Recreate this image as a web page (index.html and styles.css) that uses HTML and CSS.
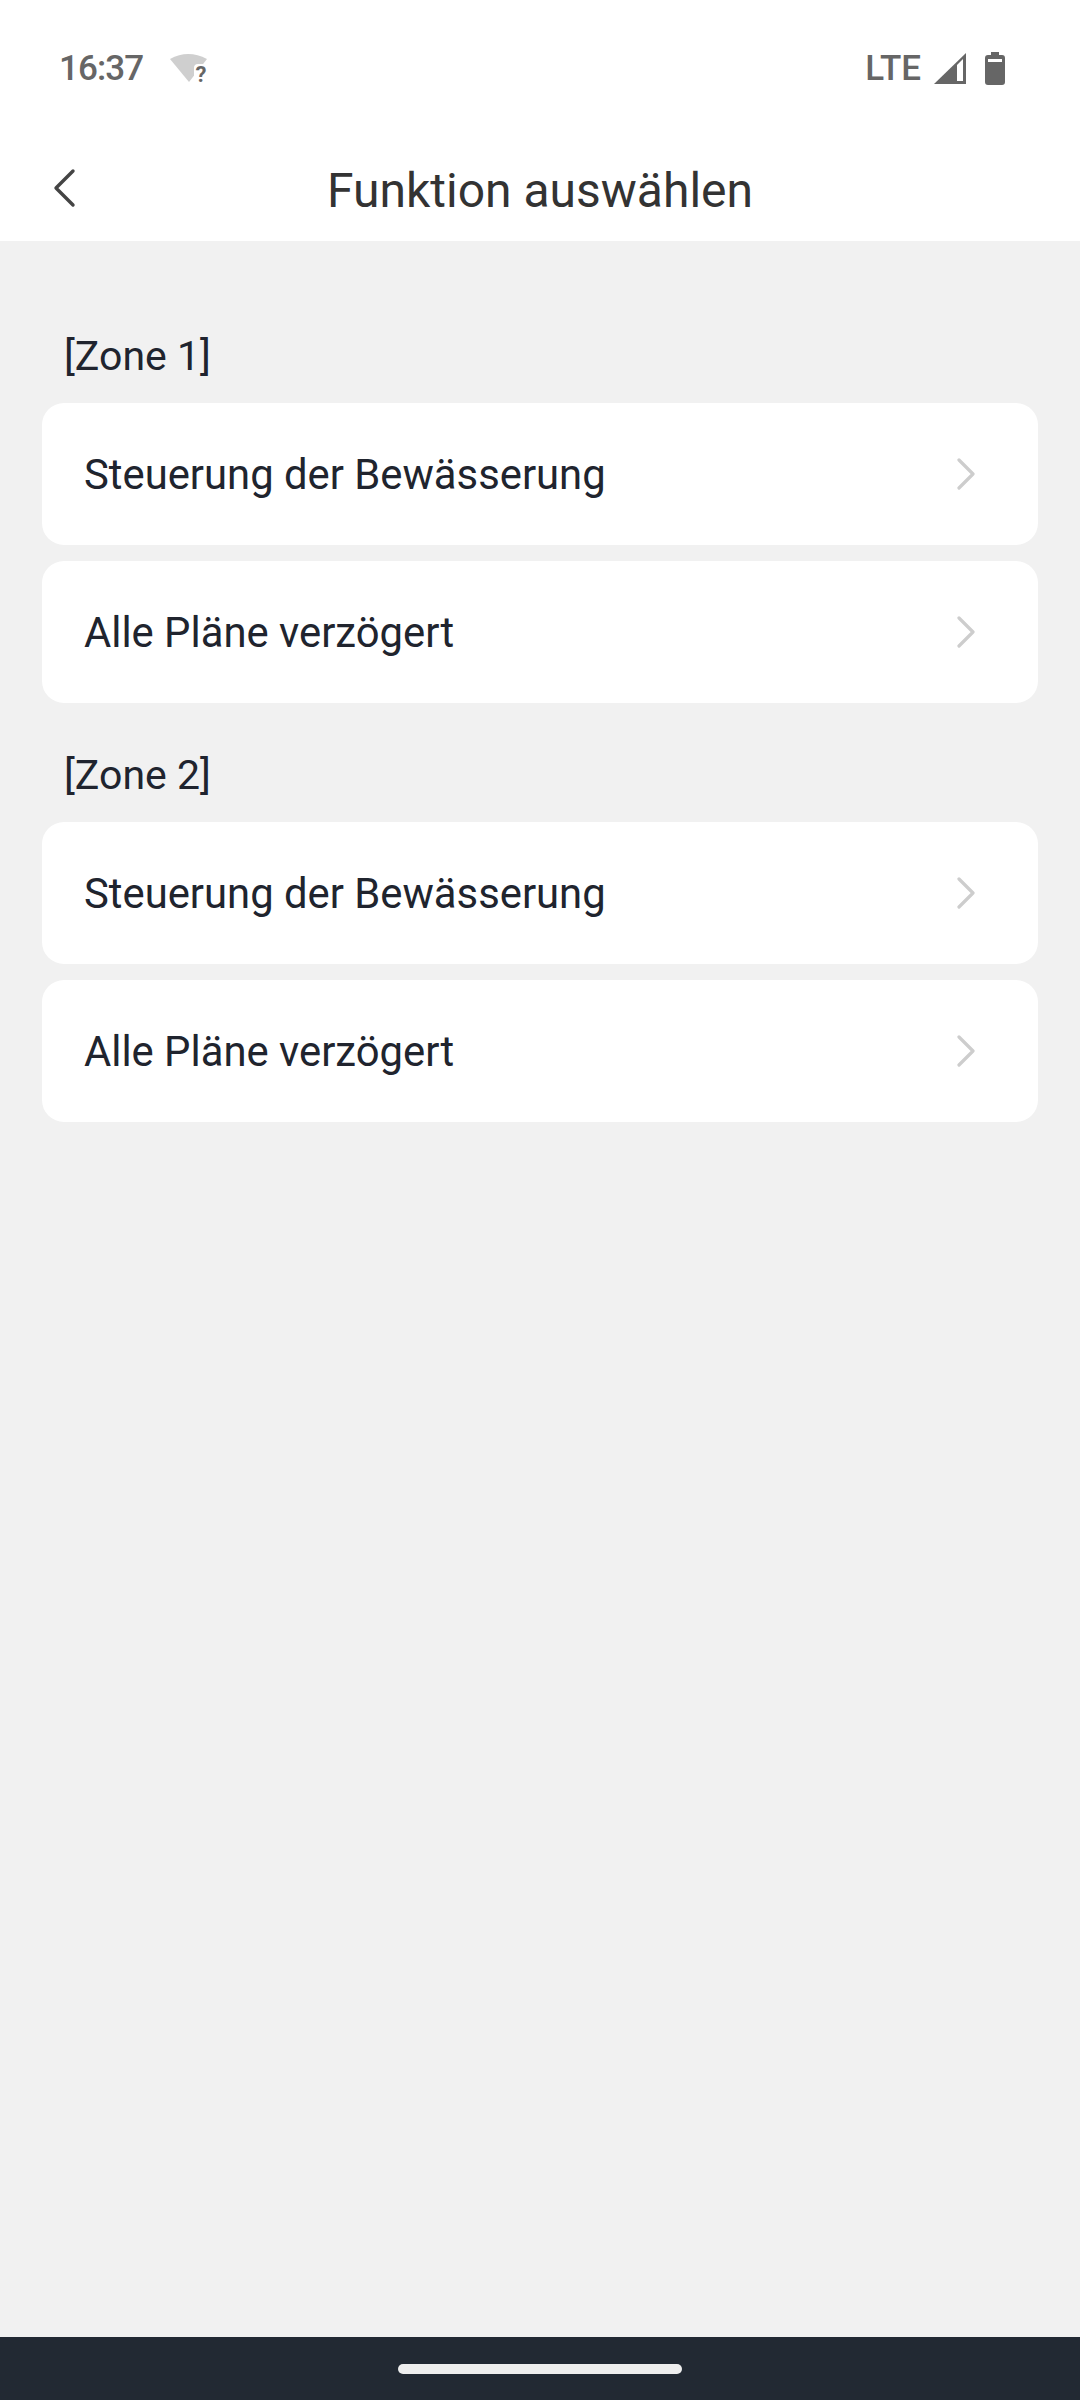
FILE: index.html
```html
<!DOCTYPE html>
<html lang="de">
<head>
    <meta charset="UTF-8">
    <meta name="viewport" content="width=device-width, initial-scale=1.0">
    <title>Funktion auswählen</title>
    <link rel="stylesheet" href="styles.css">
</head>
<body>
    <div class="screen">
        <div class="status-bar">
            <div class="status-left">
                <span class="status-text time">16:37</span>
                <svg class="wifi-icon" width="40" height="37" viewBox="0 0 40 37">
                    <path d="M1 7 Q19 -3 38 7 L20 30 Z" fill="#cfcfcf"/>
                    <rect x="25" y="12" width="15" height="20" rx="4" fill="#fff"/>
                    <text x="32" y="30" text-anchor="middle" class="wifi-mark">?</text>
                </svg>
            </div>
            <div class="status-right">
                <span class="status-text">LTE</span>
                <svg class="signal-icon" width="32" height="31" viewBox="0 0 32 31">
                    <path d="M0 31 L32 0 V31 Z" fill="#666"/>
                    <path d="M23 12 L29 6 V28 H23 Z" fill="#fff"/>
                </svg>
                <svg class="battery-icon" width="20" height="33" viewBox="0 0 20 33">
                    <path d="M6 0 H14 V3 H17 Q20 3 20 6 V30 Q20 33 17 33 H3 Q0 33 0 30 V6 Q0 3 3 3 H6 Z" fill="#666"/>
                    <rect x="3" y="7" width="14" height="3" fill="#fff"/>
                </svg>
            </div>
        </div>

        <div class="header">
            <svg class="back-icon" width="26" height="40" viewBox="0 0 26 40">
                <path d="M22 3 L5 20 L22 37" fill="none" stroke="#444" stroke-width="3.4" stroke-linecap="round" stroke-linejoin="round"/>
            </svg>
            <h1>Funktion auswählen</h1>
        </div>

        <div class="content">
            <div class="section">
                <div class="section-title">[Zone 1]</div>
                <div class="row">
                    <span>Steuerung der Bewässerung</span>
                    <svg class="chevron" width="20" height="32" viewBox="0 0 20 32"><path d="M3 2 L17 16 L3 30" fill="none" stroke="#cdcdcd" stroke-width="3.2" stroke-linecap="round" stroke-linejoin="round"/></svg>
                </div>
                <div class="row">
                    <span>Alle Pläne verzögert</span>
                    <svg class="chevron" width="20" height="32" viewBox="0 0 20 32"><path d="M3 2 L17 16 L3 30" fill="none" stroke="#cdcdcd" stroke-width="3.2" stroke-linecap="round" stroke-linejoin="round"/></svg>
                </div>
            </div>
            <div class="section">
                <div class="section-title">[Zone 2]</div>
                <div class="row">
                    <span>Steuerung der Bewässerung</span>
                    <svg class="chevron" width="20" height="32" viewBox="0 0 20 32"><path d="M3 2 L17 16 L3 30" fill="none" stroke="#cdcdcd" stroke-width="3.2" stroke-linecap="round" stroke-linejoin="round"/></svg>
                </div>
                <div class="row">
                    <span>Alle Pläne verzögert</span>
                    <svg class="chevron" width="20" height="32" viewBox="0 0 20 32"><path d="M3 2 L17 16 L3 30" fill="none" stroke="#cdcdcd" stroke-width="3.2" stroke-linecap="round" stroke-linejoin="round"/></svg>
                </div>
            </div>
        </div>

        <div class="nav-bar"><div class="home-bar"></div></div>
    </div>
</body>
</html>
```

FILE: styles.css
```css
* { margin: 0; padding: 0; box-sizing: border-box; }
body {
    font-family: Roboto, "Noto Sans", sans-serif;
    background: #f1f1f1;
}
.screen {
    width: 1080px;
    height: 2400px;
    display: flex;
    flex-direction: column;
}
.status-bar {
    height: 132px;
    background: white;
    padding: 4px 75px 0 59px;
    display: flex;
    justify-content: space-between;
    align-items: center;
    flex-shrink: 0;
}
.status-left, .status-right { display: flex; align-items: center; }
.status-text { font-size: 35px; font-weight: 500; color: #666; }
.time { letter-spacing: -0.9px; }
.wifi-icon { margin-left: 26px; margin-top: 5px; }
.wifi-mark { font-size: 22px; font-weight: 700; fill: #666; font-family: Roboto, sans-serif; }
.signal-icon { margin-left: 13px; }
.battery-icon { margin-left: 19px; }
.header {
    height: 109px;
    background: white;
    position: relative;
    display: flex;
    align-items: center;
    justify-content: center;
    padding-top: 8px;
    flex-shrink: 0;
}
.header h1 { font-size: 48px; font-weight: 400; color: #333; }
.back-icon { position: absolute; left: 51px; top: 36px; }
.content {
    flex: 1;
    padding: 90px 42px 0;
    display: flex;
    flex-direction: column;
    gap: 47px;
}
.section { display: flex; flex-direction: column; gap: 16px; }
.section-title {
    font-size: 41px;
    color: #20242e;
    padding-left: 22px;
    line-height: 50px;
    margin-bottom: 6px;
}
.row {
    height: 142px;
    background: white;
    border-radius: 22px;
    padding: 0 62px 0 42px;
    display: flex;
    align-items: center;
    justify-content: space-between;
    font-size: 41.8px;
    color: #20242e;
}
.nav-bar {
    height: 63px;
    background: #222933;
    display: flex;
    justify-content: center;
    padding-top: 27px;
    flex-shrink: 0;
}
.home-bar {
    width: 284px;
    height: 10px;
    background: #eee;
    border-radius: 5px;
}
```
